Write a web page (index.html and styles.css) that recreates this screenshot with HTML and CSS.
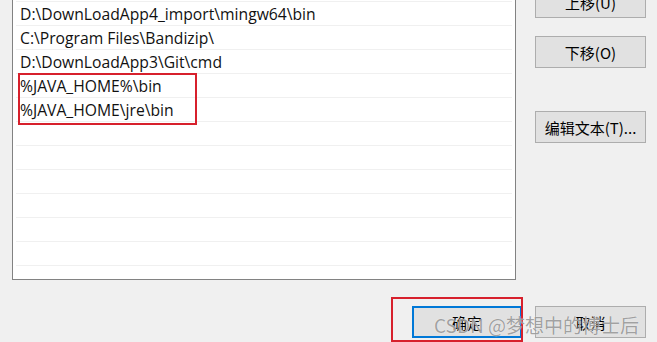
FILE: index.html
```html
<!DOCTYPE html>
<html lang="zh-CN">
<head>
    <meta charset="UTF-8">
    <meta name="viewport" content="width=device-width, initial-scale=1.0">
    <title>编辑环境变量</title>
    <link rel="stylesheet" href="styles.css">
</head>
<body>
    <div class="main">
        <!-- Path list (scrolled down a bit) -->
        <div class="path-list">
            <div class="row">C:\Windows\System32\OpenSSH\</div>
            <div class="row">D:\DownLoadApp4_import\mingw64\bin</div>
            <div class="row">C:\Program Files\Bandizip\</div>
            <div class="row">D:\DownLoadApp3\Git\cmd</div>
            <div class="marked">
                <div class="row">%JAVA_HOME%\bin</div>
                <div class="row">%JAVA_HOME\jre\bin</div>
            </div>
            <div class="row"></div>
            <div class="row"></div>
            <div class="row"></div>
            <div class="row"></div>
            <div class="row"></div>
            <div class="row"></div>
            <div class="row"></div>
            <div class="row"></div>
        </div>

        <!-- Side buttons -->
        <div class="side">
            <button class="btn">上移(U)</button>
            <button class="btn">下移(O)</button>
            <button class="btn btn-gap">编辑文本(T)...</button>
        </div>
    </div>

    <!-- Dialog buttons -->
    <div class="footer">
        <div class="marked-btn">
            <button class="btn btn-default">确定</button>
        </div>
        <button class="btn">取消</button>
        <span class="watermark">CSDN @梦想中的博士后</span>
    </div>
</body>
</html>
```

FILE: styles.css
```css
/* Page */
body {
    margin: 0;
    width: 657px;
    height: 342px;
    overflow: hidden;
    background-color: #f0f0f0;
    font-family: "Open Sans", "Noto Sans CJK SC", sans-serif;
    color: #000;
}

.main {
    display: flex;
    align-items: flex-start;
}

/* Path list */
.path-list {
    box-sizing: border-box;
    width: 504px;
    height: 303px;
    margin: -23px 0 0 12px;
    padding: 0 3px;
    background-color: #fff;
    border: 1px solid #828282;
    overflow: hidden;
}

.row {
    box-sizing: border-box;
    height: 24px;
    padding-left: 4px;
    border-bottom: 1px solid #f0f0f0;
    font-size: 15.7px;
    line-height: 24px;
    color: #111;
    white-space: nowrap;
}

.marked {
    position: relative;
}

.marked::after {
    content: "";
    position: absolute;
    left: 2px;
    top: -1px;
    width: 179px;
    height: 52px;
    box-sizing: border-box;
    border: 2px solid #d7202c;
}

/* Buttons */
.side {
    display: flex;
    flex-direction: column;
    gap: 18px;
    margin: -14px 0 0 19px;
}

.btn {
    box-sizing: border-box;
    width: 111px;
    height: 32px;
    padding: 0;
    background-color: #e1e1e1;
    border: 1px solid #adadad;
    font-family: "Noto Sans CJK SC", "Open Sans", sans-serif;
    font-size: 15px;
    color: #000;
}

.btn-gap {
    margin-top: 25px;
}

.btn-default {
    width: 110px;
    border: 2px solid #0078d7;
}

/* Footer */
.footer {
    position: relative;
    display: flex;
    justify-content: flex-end;
    gap: 13px;
    margin-top: 26px;
    padding-right: 11px;
}

.marked-btn {
    position: relative;
}

.marked-btn::after {
    content: "";
    position: absolute;
    left: -21px;
    top: -9px;
    width: 132px;
    height: 45px;
    box-sizing: border-box;
    border: 2px solid #d7202c;
}

.watermark {
    position: absolute;
    left: 434px;
    top: 5px;
    font-family: "Noto Sans CJK SC", sans-serif;
    font-size: 19px;
    color: rgba(100, 100, 100, 0.6);
    text-shadow: 0 0 1px #fff;
    white-space: nowrap;
    pointer-events: none;
}
```
